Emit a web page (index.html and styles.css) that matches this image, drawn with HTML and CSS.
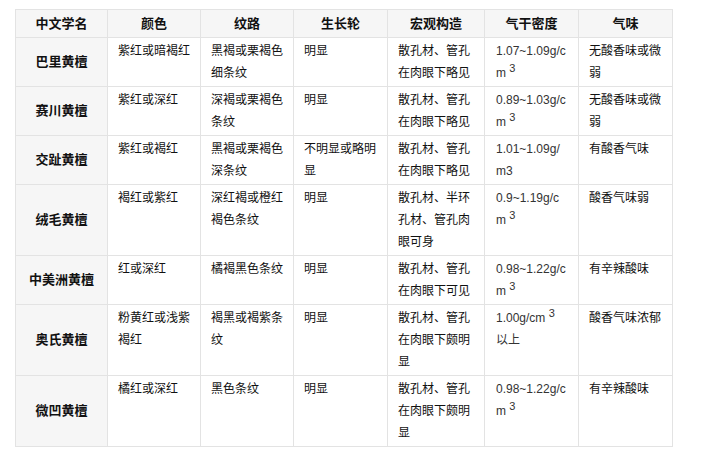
FILE: index.html
```html
<!DOCTYPE html>
<html lang="zh">
<head>
<meta charset="utf-8">
<link rel="stylesheet" href="styles.css">
</head>
<body>
<div class="wrap">
<table class="wood">
  <colgroup>
    <col class="c1"><col class="c2"><col class="c3"><col class="c4"><col class="c5"><col class="c6"><col class="c7">
  </colgroup>
  <thead>
    <tr><th>中文学名</th><th>颜色</th><th>纹路</th><th>生长轮</th><th>宏观构造</th><th>气干密度</th><th>气味</th></tr>
  </thead>
  <tbody>
    <tr><th class="name">巴里黄檀</th><td>紫红或暗褐红</td><td>黑褐或栗褐色细条纹</td><td>明显</td><td>散孔材、管孔在肉眼下略见</td><td class="num">1.07~1.09g/cm <sup>3</sup></td><td>无酸香味或微弱</td></tr>
    <tr><th class="name">赛川黄檀</th><td>紫红或深红</td><td>深褐或栗褐色条纹</td><td>明显</td><td>散孔材、管孔在肉眼下略见</td><td class="num">0.89~1.03g/cm <sup>3</sup></td><td>无酸香味或微弱</td></tr>
    <tr><th class="name">交趾黄檀</th><td>紫红或褐红</td><td>黑褐或栗褐色深条纹</td><td>不明显或略明显</td><td>散孔材、管孔在肉眼下略见</td><td class="num">1.01~1.09g/m3</td><td>有酸香气味</td></tr>
    <tr><th class="name">绒毛黄檀</th><td>褐红或紫红</td><td>深红褐或橙红褐色条纹</td><td>明显</td><td>散孔材、半环孔材、管孔肉眼可身</td><td class="num">0.9~1.19g/cm <sup>3</sup></td><td>酸香气味弱</td></tr>
    <tr><th class="name">中美洲黄檀</th><td>红或深红</td><td>橘褐黑色条纹</td><td>明显</td><td>散孔材、管孔在肉眼下可见</td><td class="num">0.98~1.22g/cm <sup>3</sup></td><td>有辛辣酸味</td></tr>
    <tr><th class="name">奥氏黄檀</th><td>粉黄红或浅紫褐红</td><td>褐黑或褐紫条纹</td><td>明显</td><td>散孔材、管孔在肉眼下颇明显</td><td class="num">1.00g/cm <sup>3</sup> 以上</td><td>酸香气味浓郁</td></tr>
    <tr><th class="name">微凹黄檀</th><td>橘红或深红</td><td>黑色条纹</td><td>明显</td><td>散孔材、管孔在肉眼下颇明显</td><td class="num">0.98~1.22g/cm <sup>3</sup></td><td>有辛辣酸味</td></tr>
  </tbody>
</table>
</div>
</body>
</html>
```

FILE: styles.css
```css
html, body {
  margin: 0;
  padding: 0;
  background: #fff;
}
.wrap {
  padding: 9px 0 0 15px;
}
.wood {
  border-collapse: collapse;
  table-layout: fixed;
  width: 658px;
  font-family: "Liberation Sans", "Noto Sans CJK SC", sans-serif;
  font-size: 12px;
  line-height: 22px;
  color: #111;
}
.c1 { width: 92px; }
.c2 { width: 93px; }
.c3 { width: 93px; }
.c4 { width: 94px; }
.c5 { width: 97px; }
.c6 { width: 94px; }
.c7 { width: 94px; }
.wood th, .wood td {
  border: 1px solid #e3e3e3;
  padding: 2px 10px 2px 10px;
  text-align: left;
  vertical-align: top;
  word-break: break-all;
}
.wood thead th {
  background: #f6f6f6;
  text-align: center;
  font-size: 13px;
  font-weight: bold;
  color: #111;
  padding: 3px 4px 2px;
  vertical-align: middle;
}
.wood th.name {
  background: #f6f6f6;
  text-align: center;
  vertical-align: middle;
  font-size: 13px;
  font-weight: bold;
  color: #111;
  padding: 2px 4px;
}
.wood td.num {
  padding-left: 11px;
  color: #333;
}
.wood sup {
  font-size: 11px;
  line-height: 0;
  vertical-align: 5px;
}
```
